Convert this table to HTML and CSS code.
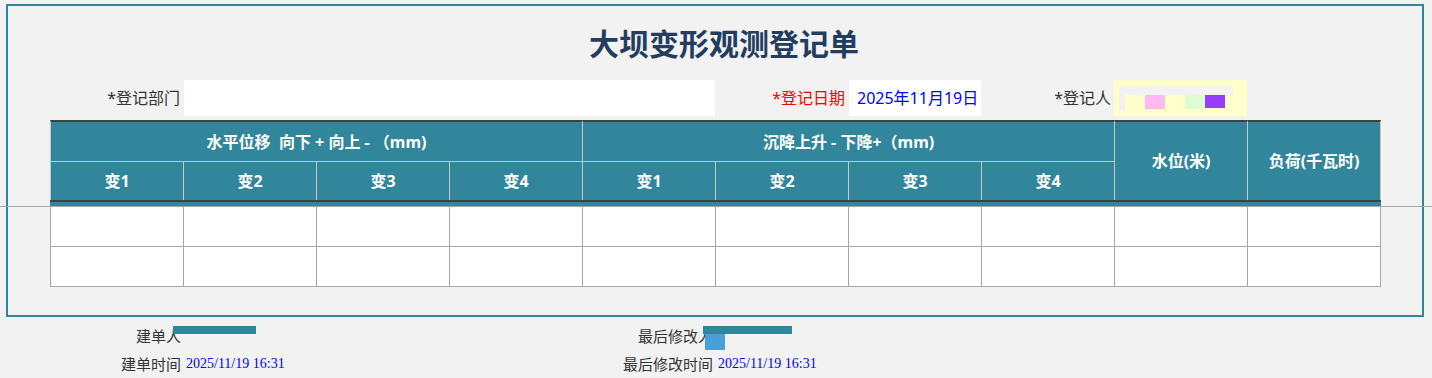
FILE: index.html
```html
<!DOCTYPE html>
<html lang="zh-CN">
<head>
<meta charset="utf-8">
<title>大坝变形观测登记单</title>
<link rel="stylesheet" href="styles.css">
</head>
<body>
<div class="pane-line"></div>
<div class="frame">
  <h1 class="title">大坝变形观测登记单</h1>
  <div class="form-row">
    <div class="lbl l1">*登记部门</div>
    <div class="field in1"></div>
    <div class="lbl l2">*登记日期</div>
    <div class="field date">2025年11月19日</div>
    <div class="lbl l3">*登记人</div>
    <div class="field who">
      <div class="mask-top"></div>
      <div class="mask-row">
        <span class="m m-grey"></span>
        <span class="m m-pink"></span>
        <span class="m m-green"></span>
        <span class="m m-purple"></span>
      </div>
    </div>
  </div>
  <table class="grid">
    <colgroup>
      <col class="c-first"><col class="c"><col class="c"><col class="c"><col class="c">
      <col class="c"><col class="c"><col class="c"><col class="c"><col class="c">
    </colgroup>
    <thead>
      <tr class="h1">
        <th colspan="4" class="first">水平位移&nbsp;&nbsp;向下 + 向上 - （mm)</th>
        <th colspan="4">沉降上升 - 下降+（mm)</th>
        <th rowspan="2" class="tall">水位(米)</th>
        <th rowspan="2" class="tall">负荷(千瓦时)</th>
      </tr>
      <tr class="h2">
        <th class="first">变1</th><th>变2</th><th>变3</th><th>变4</th>
        <th>变1</th><th>变2</th><th>变3</th><th>变4</th>
      </tr>
      <tr class="band"><td colspan="10"></td></tr>
    </thead>
    <tbody>
      <tr class="r1">
        <td class="first"></td><td></td><td></td><td></td><td></td>
        <td></td><td></td><td></td><td></td><td></td>
      </tr>
      <tr class="r2">
        <td class="first"></td><td></td><td></td><td></td><td></td>
        <td></td><td></td><td></td><td></td><td></td>
      </tr>
    </tbody>
  </table>
</div>
<div class="footer">
  <div class="f-lbl">建单人</div>
  <div class="f-val stack"><span class="bar bar-a"></span></div>
  <div class="f-lbl">最后修改人</div>
  <div class="f-val stack"><span class="bar bar-b"></span><span class="blk"></span></div>
  <div class="f-lbl">建单时间</div>
  <div class="f-val time">2025/11/19 16:31</div>
  <div class="f-lbl">最后修改时间</div>
  <div class="f-val time">2025/11/19 16:31</div>
</div>
</body>
</html>
```
FILE: styles.css
```css
html, body {
  margin: 0;
  padding: 0;
}
body {
  background: #f2f2f2;
  font-family: "Noto Sans", "Noto Sans CJK SC", sans-serif;
  color: #333333;
  position: relative;
  height: 378px;
  overflow: hidden;
}
.pane-line {
  position: absolute;
  left: 0;
  right: 0;
  top: 206px;
  height: 1px;
  background: #a6a6a6;
  z-index: 2;
}
.frame {
  margin: 4px 0 0 6px;
  width: 1418px;
  height: 313px;
  box-sizing: border-box;
  border: 2px solid #31869b;
  padding-top: 18px;
}
.title {
  margin: 0;
  padding-left: 18px;
  text-align: center;
  font-size: 30px;
  line-height: 40px;
  font-weight: 700;
  color: #233d5f;
}
.form-row {
  display: flex;
  margin-top: 16px;
  height: 36px;
  font-size: 16px;
  line-height: 36px;
}
.lbl {
  box-sizing: border-box;
  text-align: right;
  padding-right: 4px;
  white-space: nowrap;
}
.l1 { width: 176px; }
.l2 { width: 134px; color: #ff0000; }
.l3 { width: 133px; padding-right: 3px; }
.field {
  height: 36px;
  box-sizing: border-box;
}
.in1 { width: 531px; background: #ffffff; }
.date {
  width: 132px;
  background: #ffffff;
  color: #0000ff;
  padding-left: 8px;
  white-space: nowrap;
}
.who {
  width: 133px;
  background: #ffffcc;
  padding: 6px 0 0 5px;
}
.mask-top {
  width: 114px;
  height: 9px;
  background: #f2f2f2;
}
.mask-row {
  display: flex;
  align-items: flex-start;
}
.m { display: block; }
.m-grey { width: 6px; height: 16px; background: #f2f2f2; margin-right: 20px; }
.m-pink { width: 20px; height: 14px; background: #ffb9ee; margin-right: 20px; }
.m-green { width: 20px; height: 14px; background: #dcfcd4; }
.m-purple { width: 20px; height: 13px; background: #9a3cff; }

.grid {
  margin: 4px 0 0 42px;
  border-collapse: separate;
  border-spacing: 0;
  table-layout: fixed;
  width: 1331px;
}
.c-first { width: 134px; }
.c { width: 133px; }
.grid th, .grid td {
  padding: 0;
  text-align: center;
  vertical-align: middle;
}
.grid th {
  background: #31869b;
  color: #ffffff;
  font-weight: 700;
  font-size: 16px;
  line-height: 20px;
  border-right: 1px solid #c8c8c8;
  white-space: nowrap;
}
.grid th.first { border-left: 1px solid #c8c8c8; }
.h1 { height: 42px; }
.h1 th {
  border-top: 2px solid #404040;
  border-bottom: 1px solid #c8c8c8;
}
.h1 th.tall { border-bottom: none; }
.h2 { height: 38px; }
.band { height: 6px; }
.band td {
  background: #31869b;
  border-top: 2px solid #404040;
  height: 4px;
  line-height: 0;
  font-size: 0;
}
.grid tbody td {
  background: #ffffff;
  border-right: 1px solid #a6a6a6;
  border-bottom: 1px solid #a6a6a6;
}
.grid tbody td.first { border-left: 1px solid #a6a6a6; }
.r1 { height: 41px; }
.r1 td { border-top: 1px solid #a6a6a6; }
.r2 { height: 40px; }

.footer {
  display: grid;
  grid-template-columns: 181px 339px 193px auto;
  grid-auto-rows: 28px;
  margin-top: 5px;
  font-size: 15px;
  line-height: 28px;
  color: #333333;
}
.f-lbl {
  text-align: right;
  white-space: nowrap;
}
.f-val {
  padding-left: 5px;
  white-space: nowrap;
}
.time {
  font-family: "Liberation Serif", serif;
  font-size: 14px;
  color: #0000ff;
}
.stack {
  display: flex;
  flex-direction: column;
  align-items: flex-start;
  padding-top: 4px;
  box-sizing: border-box;
}
.bar {
  display: block;
  height: 8px;
  background: #31869b;
}
.bar-a { width: 83px; margin-left: -13px; }
.bar-b { width: 89px; margin-left: -15px; }
.blk {
  display: block;
  width: 20px;
  height: 16px;
  background: #4a9fd8;
  margin-left: -13px;
}
```
